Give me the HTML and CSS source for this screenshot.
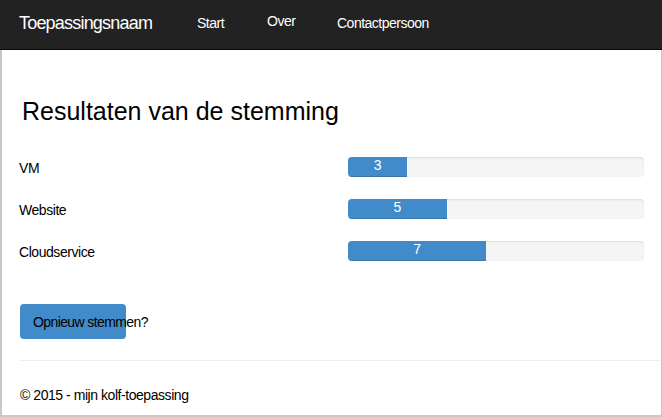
FILE: index.html
```html
<!DOCTYPE html>
<html lang="nl">
<head>
<meta charset="utf-8">
<title>Resultaten van de stemming</title>
<link rel="stylesheet" href="styles.css">
</head>
<body>
<header class="navbar">
  <a class="brand" href="#">Toepassingsnaam</a>
  <nav class="nav">
    <a class="nav-link" href="#">Start</a>
    <a class="nav-link nav-over" href="#">Over</a>
    <a class="nav-link" href="#">Contactpersoon</a>
  </nav>
</header>
<div class="frame">
  <main class="content">
    <h2 class="title">Resultaten van de stemming</h2>
    <div class="results">
      <div class="label">VM</div>
      <div class="progress"><div class="bar" style="width:20%">3</div></div>
      <div class="label">Website</div>
      <div class="progress"><div class="bar" style="width:33.333%">5</div></div>
      <div class="label">Cloudservice</div>
      <div class="progress"><div class="bar" style="width:46.667%">7</div></div>
    </div>
    <div class="actions">
      <a class="btn" href="#"><span class="btn-text">Opnieuw stemmen?</span></a>
    </div>
  </main>
  <hr class="divider">
  <footer class="footer">© 2015 - mijn kolf-toepassing</footer>
</div>
</body>
</html>
```

FILE: styles.css
```css
* { box-sizing: border-box; }
html, body {
  margin: 0;
  padding: 0;
  height: 100%;
}
body {
  font-family: "Liberation Sans", Arial, sans-serif;
  font-size: 14px;
  letter-spacing: -0.45px;
  color: #000;
  background: #fff;
  display: flex;
  flex-direction: column;
}
a { text-decoration: none; }

.navbar {
  height: 50px;
  background: #222;
  border-bottom: 1px solid #080808;
  display: flex;
  align-items: center;
  padding-left: 19px;
  flex-shrink: 0;
}
.brand {
  color: #fff;
  font-size: 18px;
  letter-spacing: -0.8px;
  width: 178px;
  margin-top: -3px;
}
.nav {
  display: flex;
  align-items: center;
}
.nav-link {
  color: #fff;
  font-size: 14px;
  width: 70px;
  white-space: nowrap;
  margin-top: -3px;
  letter-spacing: -0.5px;
}
.nav-over { margin-top: -7px; }

.frame {
  flex: 1;
  border-left: 2px solid #c8c8c8;
  border-right: 1px solid #c8c8c8;
  border-bottom: 2px solid #c8c8c8;
  display: flex;
  flex-direction: column;
}
.content {
  padding: 0 17px 0 18px;
}
.title {
  font-size: 25px;
  font-weight: normal;
  margin: 45px 0 0 2px;
  line-height: 32px;
  letter-spacing: 0;
}
.results {
  display: grid;
  grid-template-columns: 328px 296px;
  grid-auto-rows: 20px;
  row-gap: 22px;
  align-items: start;
  margin-top: 30px;
}
.label {
  font-size: 14px;
  height: 20px;
  line-height: 22px;
  margin-left: -1px;
}
.progress {
  height: 20px;
  background: #f5f5f5;
  border-radius: 4px;
  box-shadow: inset 0 1px 2px rgba(0,0,0,0.1);
  overflow: hidden;
}
.bar {
  height: 100%;
  background: #428bca;
  color: #fff;
  font-size: 14px;
  line-height: 17px;
  letter-spacing: 0;
  text-align: center;
  box-shadow: inset 0 -1px 0 rgba(0,0,0,0.15);
}
.actions {
  margin-top: 43px;
}
.btn {
  display: block;
  width: 106px;
  height: 35px;
  background: #428bca;
  border-radius: 4px;
  color: #000;
  font-size: 14px;
  padding: 10px 0 0 13px;
  white-space: nowrap;
  letter-spacing: -0.6px;
}
.divider {
  border: 0;
  border-top: 1px solid #eee;
  margin: 21px 0 0 18px;
}
.footer {
  padding: 26px 0 0 18px;
  font-size: 14px;
}
```
